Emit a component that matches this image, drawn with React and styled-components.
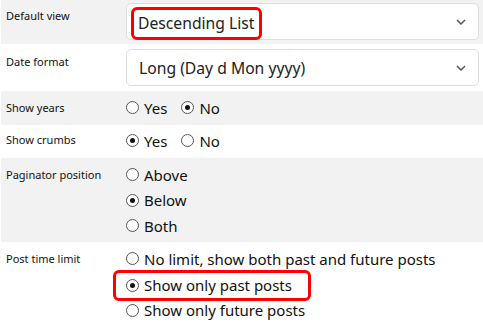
import React from 'react';
import styled, {createGlobalStyle} from 'styled-components';

const Global = createGlobalStyle`
  html, body {
    margin: 0;
    padding: 0;
    background: #fff;
  }
  body {
    font-family: "Noto Sans", "Open Sans", sans-serif;
    color: #000;
  }
`;

const Form = styled.div`
  width: 483px;
  height: 323px;
  overflow: hidden;
  padding-left: 1px;
  box-sizing: border-box;
`;

const Row = styled.div`
  display: grid;
  grid-template-columns: 125px 1fr;
  align-items: start;
  background: ${p => (p.$shaded ? '#f2f2f2' : '#fff')};
  height: ${p => p.$h}px;
  box-sizing: border-box;
  padding: ${p => p.$pad || '0'};
`;

const Label = styled.div`
  font-size: 11px;
  line-height: 15px;
  padding-left: 5px;
  padding-top: ${p => p.$top || 0}px;
  color: #111;
`;

const Select = styled.div`
  display: flex;
  align-items: center;
  height: 37px;
  margin-right: 4px;
  padding: 0 12px;
  background: #fff;
  border: 1px solid #dedede;
  border-radius: 5px;
  box-sizing: border-box;
  font-size: 15.7px;
  color: #222;
`;

const SelectText = styled.span`
  flex: 1;
  white-space: nowrap;
`;

const Highlight = styled.span`
  display: inline-flex;
  align-items: center;
  height: 33px;
  margin-left: -8px;
  margin-top: 3px;
  padding: 0 5px 0 4px;
  border: 3px solid #f00;
  border-radius: 6px;
  box-sizing: border-box;
`;

const Chevron = () => (
  <svg width="10" height="6" viewBox="0 0 10 6" fill="none">
    <path d="M1 1l4 4 4-4" stroke="#555" strokeWidth="1.5" />
  </svg>
);

const Options = styled.div`
  display: flex;
  flex-direction: ${p => (p.$inline ? 'row' : 'column')};
  gap: ${p => (p.$inline ? '14px' : '0')};
  padding-top: ${p => p.$top || 0}px;
`;

const Option = styled.label`
  display: inline-flex;
  align-items: center;
  gap: 5px;
  height: 25.5px;
  font-size: 15px;
  color: #111;
  white-space: nowrap;
  box-sizing: border-box;
  ${p =>
    p.$marked &&
    `
    margin-left: -13px;
    padding-left: 10px;
    padding-right: 16px;
    width: fit-content;
    height: 31px;
    margin-top: -2px;
    margin-bottom: -3px;
    border: 3px solid #f00;
    border-radius: 6px;
  `}
`;

const Dot = styled.span`
  width: 11px;
  height: 11px;
  border-radius: 50%;
  border: 1px solid #555;
  background: #fff;
  display: inline-flex;
  align-items: center;
  justify-content: center;
  flex: none;

  &::after {
    content: '';
    width: 5px;
    height: 5px;
    border-radius: 50%;
    background: ${p => (p.$on ? '#111' : 'transparent')};
  }
`;

const Radio = ({on, marked, children}) => (
  <Option $marked={marked}>
    <Dot $on={on} />
    {children}
  </Option>
);

export default function App() {
  return (
    <>
      <Global />
      <Form>
        <Row $shaded $h={44} $pad="3px 0 0">
          <Label $top={5}>Default view</Label>
          <Select>
            <SelectText>
              <Highlight>Descending List</Highlight>
            </SelectText>
            <Chevron />
          </Select>
        </Row>
        <Row $h={47} $pad="5px 0 0">
          <Label $top={5}>Date format</Label>
          <Select>
            <SelectText>Long (Day d Mon yyyy)</SelectText>
            <Chevron />
          </Select>
        </Row>
        <Row $shaded $h={34}>
          <Label $top={9}>Show years</Label>
          <Options $inline $top={4}>
            <Radio>Yes</Radio>
            <Radio on>No</Radio>
          </Options>
        </Row>
        <Row $h={33}>
          <Label $top={7}>Show crumbs</Label>
          <Options $inline $top={3}>
            <Radio on>Yes</Radio>
            <Radio>No</Radio>
          </Options>
        </Row>
        <Row $shaded $h={84}>
          <Label $top={9}>Paginator position</Label>
          <Options $top={4}>
            <Radio>Above</Radio>
            <Radio on>Below</Radio>
            <Radio>Both</Radio>
          </Options>
        </Row>
        <Row $h={81}>
          <Label $top={9}>Post time limit</Label>
          <Options $top={4}>
            <Radio>No limit, show both past and future posts</Radio>
            <Radio on marked>Show only past posts</Radio>
            <Radio>Show only future posts</Radio>
          </Options>
        </Row>
      </Form>
    </>
  );
}
